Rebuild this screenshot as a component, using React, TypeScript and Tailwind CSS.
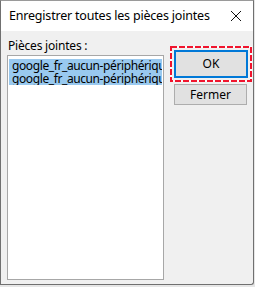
import React from "react";

export default function App() {
  const font = { fontFamily: '"Segoe UI", "Noto Sans", "Open Sans", sans-serif' };
  return (
    <div className="w-[255px] h-[287px] bg-[#e6e6e6] overflow-hidden" style={font}>
      <div className="w-[254px] h-[285px] flex flex-col border border-[#707070] border-t-[#9a9a9a] bg-[#f0f0f0] rounded-br-[3px]">
        <div className="h-[30px] shrink-0 bg-white flex items-center justify-between pl-[8px] pr-[10px]">
          <span className="text-[12.5px] text-black leading-none tracking-[-0.2px]">
            Enregistrer toutes les pièces jointes
          </span>
          <svg width="12" height="12" viewBox="0 0 12 12" className="mr-[1px]">
            <path d="M1 1 L11 11 M11 1 L1 11" stroke="#111" strokeWidth="1" />
          </svg>
        </div>
        <div className="flex flex-1 pl-[6px] pt-[7px] pb-[4px]">
          <div className="flex flex-col w-[157px]">
            <span className="text-[12px] text-black leading-[15px] pl-[1px] tracking-[-0.2px]">Pièces jointes :</span>
            <div className="mt-[2px] flex-1 bg-white border border-[#a7a7a7] pt-[3px] px-[1px] overflow-hidden">
              <div className="bg-[#99c9ef] text-[12px] leading-[13px] text-black whitespace-nowrap overflow-hidden pl-[3px] tracking-[-0.4px]">
                <div>google_fr_aucun-périphérique</div>
                <div>google_fr_aucun-périphérique</div>
              </div>
            </div>
          </div>
          <div className="flex flex-col ml-[6px] mt-[8px] w-[82px]">
            <div className="relative h-[36px] p-[4px]">
              <div className="w-full h-full border-2 border-[#0078d7] bg-[#e1e1e1] flex items-center justify-center text-[12px] text-black">
                OK
              </div>
              <svg className="absolute inset-0" width="82" height="36" viewBox="0 0 82 36">
                <rect x="1" y="1" width="80" height="34" fill="none" stroke="#fff" strokeWidth="2" opacity="0.7" />
                <rect x="1" y="1" width="80" height="34" fill="none" stroke="#f0142d" strokeWidth="2" strokeDasharray="6 2" />
              </svg>
            </div>
            <div className="ml-[4px] mt-[2px] w-[73px] h-[21px] border border-[#adadad] bg-[#e1e1e1] flex items-center justify-center text-[12px] text-black">
              Fermer
            </div>
          </div>
        </div>
      </div>
    </div>
  );
}
